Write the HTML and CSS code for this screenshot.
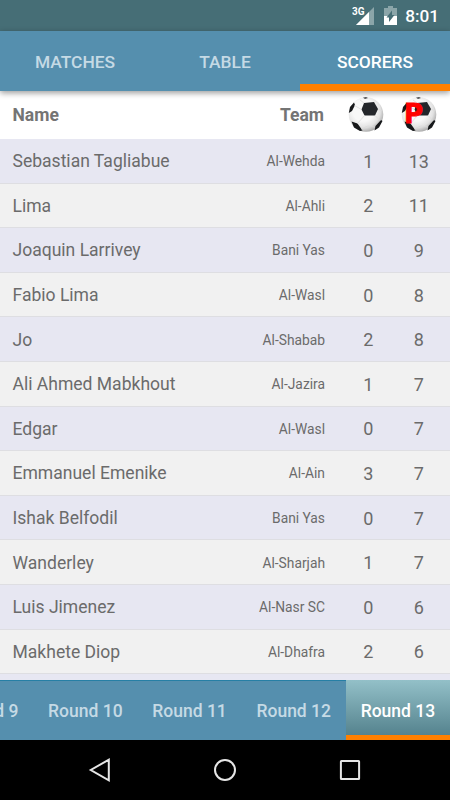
FILE: index.html
```html
<!DOCTYPE html>
<html lang="en">
<head>
    <meta charset="UTF-8">
    <title>Scorers</title>
    <link rel="stylesheet" href="styles.css">
</head>
<body>
    <div class="status-bar">
        <svg class="signal" width="24" height="22" viewBox="0 0 24 22">
            <path d="M22 2V20H4Z" fill="#8ba5a9"/>
            <path d="M17 7V20H4Z" fill="#fff"/>
            <rect x="0" y="0" width="13" height="10.5" fill="#466e76"/>
            <text x="0" y="9.5" class="network">3G</text>
        </svg>
        <svg class="battery" width="13" height="19" viewBox="0 0 13 19">
            <path d="M4 0H9V2H13V10H0V2H4Z" fill="#8ba5a9"/>
            <path d="M0 10H13V19H0Z" fill="#fff"/>
            <path d="M8 4.5V9H10.5L5 16V11.5H2.5Z" fill="#466e76"/>
        </svg>
        <span class="clock">8:01</span>
    </div>
    <div class="tabs">
        <div class="tab">MATCHES</div>
        <div class="tab">TABLE</div>
        <div class="tab active">SCORERS</div>
    </div>
    <div class="list">
        <div class="row head">
            <span class="name">Name</span>
            <span class="team">Team</span>
            <span class="num goals">
                <svg class="ball" width="36" height="36" viewBox="0 0 36 36">
                    <defs>
                        <radialGradient id="shade" cx="42%" cy="38%" r="62%">
                            <stop offset="0.5" stop-color="#f8f8f8"/>
                            <stop offset="0.8" stop-color="#e2e2e2"/>
                            <stop offset="1" stop-color="#b0b0b0"/>
                        </radialGradient>
                        <g id="football">
                            <circle cx="18" cy="17.5" r="17.3" fill="url(#shade)"/>
                            <path d="M16 6L26 5L30 12L27 18.5H16.5L13.5 12.5Z" fill="#23262a"/>
                            <path d="M0.8 16L2 10L6 5.5L7 8L4 14Z M3.5 24.5L9.5 26.5L14.5 33.5L12 34L6 30.5Z M26.5 33.5L27.5 29L33 23L34.5 24L31 30.5Z M15 0.8L18 0.2L20 1L17 1.8Z" fill="#17191b"/>
                            <path d="M13.5 12.5L6.5 8.5M16.5 18.5L9.5 26.5M27 18.5L32 23.5M30 12L34 14M16 6L12 3M13 32L20 29L27 30" fill="none" stroke="#dadada" stroke-width="0.8"/>
                        </g>
                    </defs>
                    <use href="#football"/>
                </svg>
            </span>
            <span class="num">
                <svg class="ball" width="36" height="36" viewBox="0 0 36 36">
                    <use href="#football"/>
                    <text x="3" y="26.3" class="points">P</text>
                </svg>
            </span>
        </div>
        <div class="row"><span class="name">Sebastian Tagliabue</span><span class="team">Al-Wehda</span><span class="num">1</span><span class="num">13</span></div>
        <div class="row"><span class="name">Lima</span><span class="team">Al-Ahli</span><span class="num">2</span><span class="num">11</span></div>
        <div class="row"><span class="name">Joaquin Larrivey</span><span class="team">Bani Yas</span><span class="num">0</span><span class="num">9</span></div>
        <div class="row"><span class="name">Fabio Lima</span><span class="team">Al-Wasl</span><span class="num">0</span><span class="num">8</span></div>
        <div class="row"><span class="name">Jo</span><span class="team">Al-Shabab</span><span class="num">2</span><span class="num">8</span></div>
        <div class="row"><span class="name">Ali Ahmed Mabkhout</span><span class="team">Al-Jazira</span><span class="num">1</span><span class="num">7</span></div>
        <div class="row"><span class="name">Edgar</span><span class="team">Al-Wasl</span><span class="num">0</span><span class="num">7</span></div>
        <div class="row"><span class="name">Emmanuel Emenike</span><span class="team">Al-Ain</span><span class="num">3</span><span class="num">7</span></div>
        <div class="row"><span class="name">Ishak Belfodil</span><span class="team">Bani Yas</span><span class="num">0</span><span class="num">7</span></div>
        <div class="row"><span class="name">Wanderley</span><span class="team">Al-Sharjah</span><span class="num">1</span><span class="num">7</span></div>
        <div class="row"><span class="name">Luis Jimenez</span><span class="team">Al-Nasr SC</span><span class="num">0</span><span class="num">6</span></div>
        <div class="row"><span class="name">Makhete Diop</span><span class="team">Al-Dhafra</span><span class="num">2</span><span class="num">6</span></div>
        <div class="row"></div>
    </div>
    <div class="rounds">
        <div class="round first">Round 9</div>
        <div class="round">Round 10</div>
        <div class="round">Round 11</div>
        <div class="round">Round 12</div>
        <div class="round active">Round 13</div>
    </div>
    <div class="nav-bar">
        <svg width="24" height="24" viewBox="0 0 24 24"><path d="M20.8 1.7V22.3L2.8 12Z"/></svg>
        <svg width="24" height="24" viewBox="0 0 24 24"><circle cx="12" cy="12" r="10"/></svg>
        <svg width="24" height="24" viewBox="0 0 24 24"><rect x="2.9" y="2.9" width="18.2" height="18.2" rx="0.5"/></svg>
    </div>
</body>
</html>
```
FILE: styles.css
```css
body {
    font-family: Roboto, sans-serif;
    margin: 0;
    height: 800px;
    display: flex;
    flex-direction: column;
    overflow: hidden;
    color: #6b6b6b;
}
.status-bar {
    height: 31px;
    flex: none;
    box-sizing: border-box;
    display: flex;
    justify-content: flex-end;
    align-items: flex-start;
    padding: 5px 11px 0 0;
    background-color: #466e76;
    color: white;
}
.signal {
    margin-right: 8px;
}
.network {
    font-size: 10px;
    font-weight: bold;
    fill: white;
}
.battery {
    margin: 1px 8px 0 0;
}
.clock {
    font-size: 17.2px;
    font-weight: 500;
    line-height: 23px;
}
.tabs {
    height: 60px;
    flex: none;
    display: flex;
    background-color: #558fae;
    position: relative;
    z-index: 1;
    box-shadow: 0 2px 6px rgba(0, 0, 0, 0.4);
}
.tab {
    flex: 1;
    box-sizing: border-box;
    text-align: center;
    font-size: 17.4px;
    font-weight: 500;
    line-height: 62px;
    color: #c5dae5;
}
.tab.active {
    color: white;
    border-bottom: 7px solid #ff8000;
}
.list {
    height: 589px;
    flex: none;
    overflow: hidden;
}
.row {
    height: 44.6px;
    box-sizing: border-box;
    display: flex;
    align-items: center;
    padding: 1px 6px 0 12.5px;
    border-bottom: 1px solid #dedee2;
    background-color: #f1f1f1;
    font-size: 17.55px;
}
.row:nth-child(even) {
    background-color: #e7e7f2;
}
.row.head {
    height: 48px;
    padding-top: 0;
    background-color: white;
    border-bottom: none;
    font-weight: bold;
    color: #747474;
}
.name {
    flex: 1;
}
.team {
    width: 90px;
    margin-right: 18px;
    text-align: right;
    font-size: 13.8px;
}
.head .team {
    box-sizing: border-box;
    padding-right: 1px;
    font-size: 17.55px;
}
.num {
    width: 50.5px;
    text-align: center;
    font-size: 18px;
}
.ball {
    display: block;
    margin: 0 auto;
}
.goals .ball {
    margin-left: 5px;
}
.points {
    font-family: "DejaVu Sans", sans-serif;
    font-size: 26px;
    font-weight: bold;
    fill: red;
    stroke: red;
    stroke-width: 0.8px;
}
.rounds {
    height: 60px;
    flex: none;
    display: flex;
    justify-content: flex-end;
    background-color: #558fae;
    overflow: hidden;
}
.round {
    width: 104.2px;
    flex: none;
    box-sizing: border-box;
    border-top: 1px solid #267fa5;
    text-align: center;
    font-size: 17.5px;
    font-weight: 500;
    line-height: 60px;
    color: #c5dae5;
}
.round.first {
    width: 94px;
}
.round.active {
    color: white;
    border-top: none;
    border-bottom: 5px solid #ff8000;
    background: linear-gradient(#93c0c8, #55838e);
    line-height: 62px;
}
.nav-bar {
    height: 60px;
    flex: none;
    box-sizing: border-box;
    display: flex;
    justify-content: space-between;
    align-items: center;
    padding: 0 88px;
    background-color: black;
}
.nav-bar svg {
    fill: none;
    stroke: #e6e6e6;
    stroke-width: 2;
}
```
